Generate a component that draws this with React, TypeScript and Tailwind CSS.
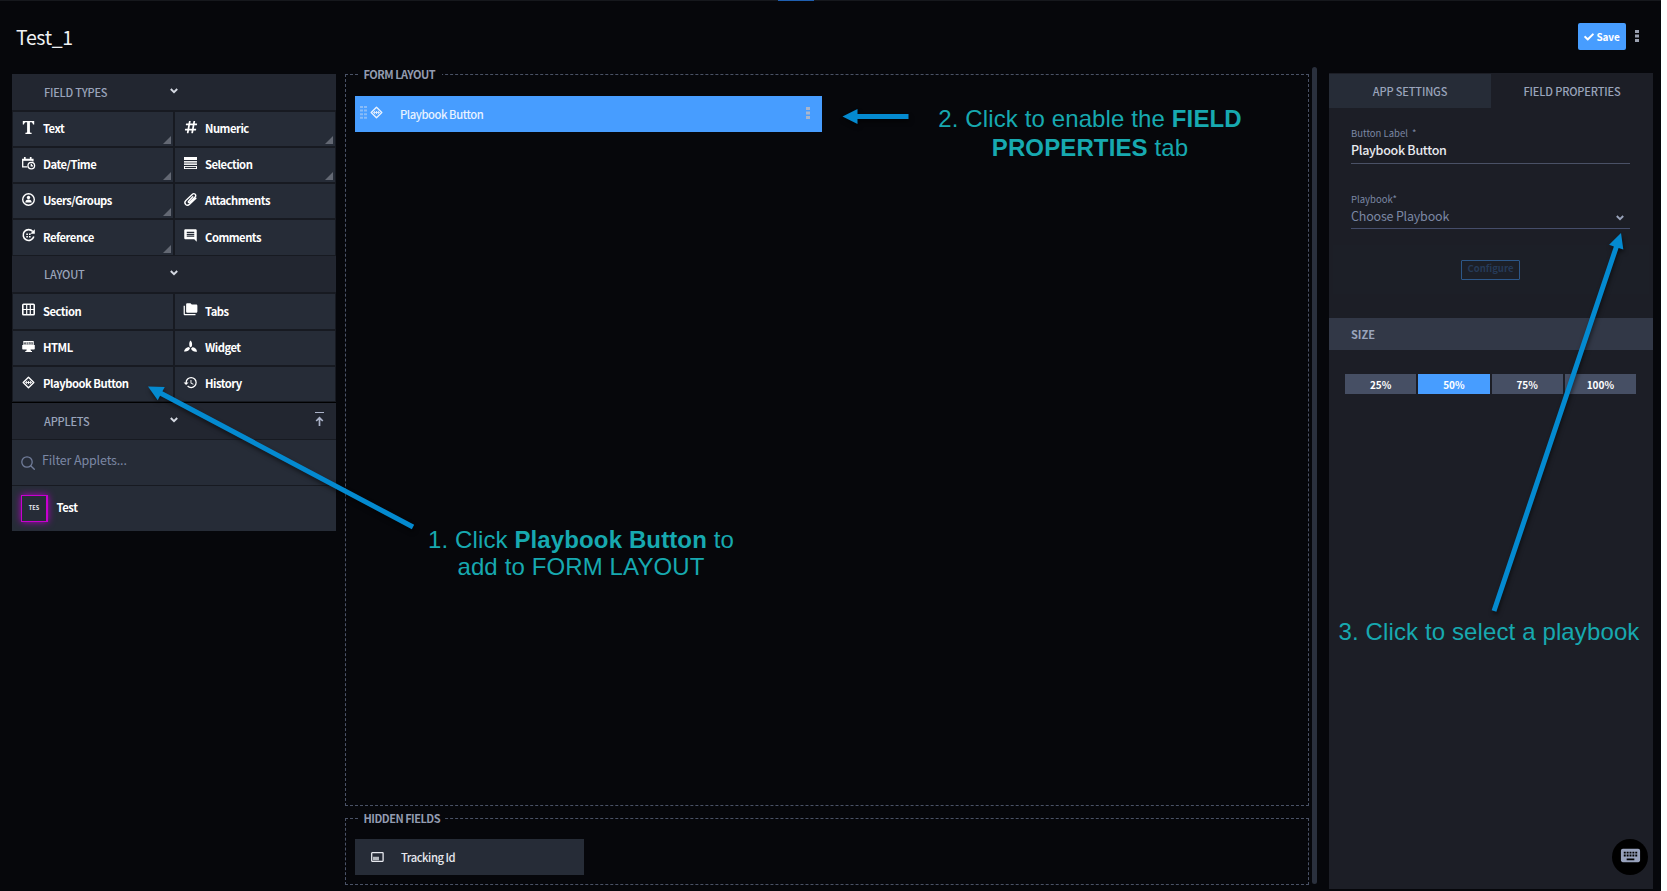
import React from "react";
import { FaCheck, FaHashtag } from "react-icons/fa";
import { MdComment, MdFolderCopy, MdHistory, MdKeyboard } from "react-icons/md";

type IconName =
  | "text" | "numeric" | "date" | "selection" | "users" | "attach" | "reference" | "comments"
  | "section" | "tabs" | "html" | "widget" | "playbook" | "history";

function Icon({ name }: { name: IconName }) {
  const cls = "block h-[13px] w-[13px] shrink-0 overflow-visible";
  switch (name) {
    case "text":
      return (
        <svg viewBox="0 0 13 13" className={cls} fill="currentColor">
          <path d="M.8 0h11.4v3.6H11C10.7 1.9 10 1.3 8.6 1.3H7.9v9.500c0 .7.3.9 1.700 1V13H3.400v-1.200c1.400-.1 1.700-.3 1.700-1V1.300h-.7C3 1.300 2.300 1.900 2 3.600H.8z" />
        </svg>
      );
    case "numeric":
      return <FaHashtag className="block h-[14px] w-[14px] shrink-0" />;
    case "comments":
      return <MdComment className="-m-px block h-[15px] w-[15px] shrink-0" />;
    case "tabs":
      return <MdFolderCopy className="-m-px block h-[15px] w-[15px] shrink-0" />;
    case "history":
      return <MdHistory className="-m-px block h-[15px] w-[15px] shrink-0" />;
    case "date":
      return (
        <svg viewBox="0 0 13 13" className={cls} fill="none" stroke="currentColor" strokeWidth="1.300">
          <path d="M5.500 9.900H.7V2.500h10.200V4.500" />
          <path d="M.5 2.800h10.600M2.800 0v3M8.700 0v3" strokeWidth="1.700" />
          <circle cx="9.300" cy="8.600" r="3.300" />
          <path d="M9.300 6.800v2.100h1.700" />
        </svg>
      );
    case "selection":
      return (
        <svg viewBox="0 0 13 13" className={cls} fill="currentColor">
          <path d="M0 0h13v3H0z" />
          <path d="M0 5h13v2H0z" opacity=".6" />
          <path d="M0 4h13v1H0zM0 7h13v1H0zM0 9h13v1H0zM0 11h13v1H0z" opacity=".9" />
          <path d="M0 9h1v3H0zM12 9h1v3h-1z" />
        </svg>
      );
    case "users":
      return (
        <svg viewBox="0 0 13 13" className={cls} fill="currentColor">
          <circle cx="6.500" cy="6.500" r="5.800" fill="none" stroke="currentColor" strokeWidth="1.400" />
          <circle cx="6.500" cy="4.500" r="1.700" />
          <path d="M3.300 9.500c0-2 1.200-3.100 3.200-3.100s3.200 1.100 3.200 3.100z" />
        </svg>
      );
    case "attach":
      return (
        <svg viewBox="0 0 13 13" className={cls} fill="none" stroke="currentColor" strokeWidth="1.400" strokeLinecap="round">
          <path d="M8.800 3.800 4.600 8.200c-.6.600-.2 1.300.2 1.400.4.100.8-.1 1-.3l5.300-5.200c1.200-1.200.6-2.500-.2-3.100C10 .4 9 .6 8.200 1.400L1.900 7.600c-1.300 1.300-1.200 2.900-.2 3.900 1.100 1 2.700.9 3.900-.2l6.300-6" />
        </svg>
      );
    case "reference":
      return (
        <svg viewBox="0 0 13 13" className={cls} fill="none" stroke="currentColor" strokeWidth="1.600">
          <path d="M10.800 2.600A5.400 5.400 0 1 0 11.800 7.500" />
          <path d="M8.200 4.700h4.600V.2z" fill="currentColor" stroke="none" />
          <path d="M4.300 5.200h1.600M7 5.200h1.600M4.300 7.700h1.600M7 7.700h1.600" />
        </svg>
      );
    case "section":
      return (
        <svg viewBox="0 0 13 13" className={cls} fill="none" stroke="currentColor">
          <rect x=".8" y="1.300" width="11.400" height="10.400" rx=".8" strokeWidth="1.600" />
          <path d="M4.700 1v11M8.300 1v11M1 6.500h11" strokeWidth="1.200" />
        </svg>
      );
    case "html":
      return (
        <svg viewBox="0 0 13 13" className={cls} fill="currentColor">
          <path d="M1.300 1h10.400v1H1.300zM.2 4.900h12.600v3.600c0 .6-.4 1-1 1H8.500l.5 1.500h1v1H3.300v-1h1l.4-1.500H1.200c-.6 0-1-.4-1-1z" />
          <path d="M1 2h11v3H1z" opacity=".75" />
          <path d="M2 2.400v2M3.700 2.400v2M2 3.400h1.700M5.500 2.400v2M7.300 4.400v-2l.9 1 .9-1v2M10.500 2.400v2" stroke="#2a2f3a" strokeWidth=".5" fill="none" />
        </svg>
      );
    case "widget":
      return (
        <svg viewBox="0 0 13 13" className={cls} fill="currentColor">
          <path d="M6.300.5c1.700 1 2.300 3.500 1.500 6L6 7.400C4.900 5.200 5 2.500 6.300.5zM5 6.900l1 1.700c-1 2.200-3.500 3.400-6 2.800C.3 9.200 2.300 7.100 5 6.900zM7 8.800l1.300-1.500c2.500 0 4.500 1.700 4.700 4.400-2.400.5-5-.6-6-2.900z" />
        </svg>
      );
    case "playbook":
      return (
        <svg viewBox="0 0 13 13" className={cls} fill="none" stroke="currentColor">
          <path d="M6.500 1.200 11.800 6.500 6.500 11.800 1.200 6.500z" strokeWidth="1.400" strokeLinejoin="round" />
          <path d="M3.500 6.500h6M5.300 4.800 3.600 6.500l1.700 1.700M7.700 4.800l1.700 1.700-1.700 1.700M6.500 5v3" strokeWidth=".9" />
        </svg>
      );
  }
}

function Chevron({ className }: { className: string }) {
  return (
    <svg viewBox="0 0 8 6" className={className} fill="none" stroke="currentColor" strokeWidth="1.900">
      <path d="M.8 1 4 4.200 7.200 1" />
    </svg>
  );
}

function Dots({ className }: { className: string }) {
  return (
    <svg viewBox="0 0 4 12" className={className} fill="currentColor">
      <path d="M0 0h4v3H0zM0 4.500h4v3H0zM0 9h4v3H0z" />
    </svg>
  );
}

type Cell = { icon: IconName; label: string; more?: boolean };

const fieldTypes: Cell[] = [
  { icon: "text", label: "Text", more: true },
  { icon: "numeric", label: "Numeric", more: true },
  { icon: "date", label: "Date/Time", more: true },
  { icon: "selection", label: "Selection", more: true },
  { icon: "users", label: "Users/Groups", more: true },
  { icon: "attach", label: "Attachments" },
  { icon: "reference", label: "Reference", more: true },
  { icon: "comments", label: "Comments" },
];

const layoutItems: Cell[] = [
  { icon: "section", label: "Section" },
  { icon: "tabs", label: "Tabs" },
  { icon: "html", label: "HTML" },
  { icon: "widget", label: "Widget" },
  { icon: "playbook", label: "Playbook Button" },
  { icon: "history", label: "History" },
];

function CellGrid({ items, className }: { items: Cell[]; className: string }) {
  return (
    <div className={"grid grid-cols-2 gap-[2px] px-px text-white " + className}>
      {items.map((c) => (
        <div key={c.label} className="relative flex items-center bg-[#262c37] pl-[9px]">
          <div className="-mt-[4px] flex w-[21px] shrink-0">
            <Icon name={c.icon} />
          </div>
          <span className="text-[11.250px] leading-none font-bold tracking-[-0.5px]">{c.label}</span>
          {c.more && (
            <svg viewBox="0 0 8 8" className="absolute right-[2px] bottom-[2px] h-2 w-2" fill="#636873">
              <path d="M8 0v8H0z" />
            </svg>
          )}
        </div>
      ))}
    </div>
  );
}

function GroupHeader({ label, children }: { label: string; children?: React.ReactNode }) {
  return (
    <div className="flex h-9 items-center bg-[#222630] pl-8">
      <span className="mt-px w-[125.500px] text-[11px] leading-none font-medium tracking-[-0.2px] text-[#9aa4bb]">{label}</span>
      <Chevron className="-mt-[3px] h-[6px] w-2 text-[#d5d9e2]" />
      {children}
    </div>
  );
}

function Sidebar() {
  return (
    <aside className="flex h-[457px] w-[324px] flex-col bg-[#171a21]">
      <GroupHeader label="FIELD TYPES" />
      <CellGrid items={fieldTypes} className="mt-[2px] mb-px grid-rows-[34px_34px_34px_35px]" />
      <GroupHeader label="LAYOUT" />
      <CellGrid items={layoutItems} className="mt-[2px] grid-rows-[35px_34px_34px]" />
      <div className="mt-px h-px bg-black" />
      <GroupHeader label="APPLETS">
        <svg viewBox="0 0 9 14" className="mr-3 -mt-[5px] ml-auto h-[14px] w-[9px]" fill="none" stroke="#aab2c8">
          <path d="M0 .5h9" />
          <path d="M4.500 14V6M1.200 9 4.500 5.800 7.800 9" strokeWidth="1.700" />
        </svg>
      </GroupHeader>
      <div className="mt-px flex h-[45px] items-center bg-[#262c37] pl-[9px]">
        <svg viewBox="0 0 14 14" className="mr-[7px] h-[14px] w-[14px]" fill="none" stroke="#717d9a" strokeWidth="1.300">
          <circle cx="6" cy="6" r="5.200" />
          <path d="m9.700 9.700 4 4" />
        </svg>
        <span className="-mt-[4px] text-[12.500px] leading-none tracking-[-0.15px] text-[#7b87a3]">Filter Applets...</span>
      </div>
      <div className="mt-px flex h-[45px] items-center bg-[#262c37] pl-[9px]">
        <div className="flex h-[27px] w-[27px] items-center justify-center border border-r-2 border-[#c800d0] text-[5.500px] leading-none font-bold text-[#e8eaf0] shadow-[0_0_7px_#b000c0]">
          TES
        </div>
        <span className="-mt-px ml-[8.500px] text-[11.250px] leading-none font-bold tracking-[-0.4px] text-white">Test</span>
      </div>
    </aside>
  );
}

function FormArea() {
  const legend = "text-[11px] leading-[14px] font-bold tracking-[-0.5px] text-[#939bb0]";
  return (
    <main className="ml-[9px] w-[964px]">
      <fieldset className="-mt-[7px] h-[739px] border border-dashed border-[#4a5266] px-[9px]">
        <legend className={"ml-[3px] pr-[7px] pl-[5.500px] " + legend}>FORM LAYOUT</legend>
        <div className="mt-[15px] flex h-9 w-[467px] items-center bg-[#479dff] pl-[5px] text-[#e8f2ff]">
          <svg viewBox="0 0 7 13" className="-mt-[3px] mr-[3px] h-[13px] w-[7px]" fill="#89bcf8">
            <path d="M0 0h3v2H0zM4 0h3v2H4zM0 3.600h3v2H0zM4 3.600h3v2H4zM0 7.200h3v2H0zM4 7.200h3v2H4zM0 10.800h3v2H0zM4 10.800h3v2H4z" />
          </svg>
          <div className="-mt-[3px]">
            <Icon name="playbook" />
          </div>
          <span className="mt-px ml-[17px] text-[11.250px] leading-none font-medium tracking-[-0.45px]">Playbook Button</span>
          <Dots className="mr-3 -mt-[2px] ml-auto h-3 w-1 text-[#a9b6cc]" />
        </div>
      </fieldset>
      <fieldset className="mt-[5px] h-[74px] border border-dashed border-[#4a5266] px-[9px]">
        <legend className={"ml-[3px] pr-[5px] pl-[5.500px] " + legend}>HIDDEN FIELDS</legend>
        <div className="mt-[14px] flex h-9 w-[229px] items-center bg-[#262c37] pl-4 text-[#e6e8ee]">
          <svg viewBox="0 0 13 10" className="h-[10px] w-[13px]" fill="none" stroke="currentColor">
            <rect x=".7" y=".7" width="11.400" height="8.600" rx=".5" strokeWidth="1.300" />
            <path d="M2 6.500h6" strokeWidth="3.500" opacity=".75" />
          </svg>
          <span className="mt-px ml-[17px] text-[11.250px] leading-none font-medium tracking-[-0.45px]">Tracking Id</span>
        </div>
      </fieldset>
    </main>
  );
}

const sizes = ["25%", "50%", "75%", "100%"];

function Properties() {
  return (
    <aside className="-mt-px ml-3 h-[816px] w-[324px] bg-[#1c1e26] pt-px">
      <div className="grid h-[34px] grid-cols-2 text-[11px] leading-none font-medium tracking-[-0.15px] text-[#9aa4bb]">
        <div className="flex items-center justify-center bg-[#262c37] pt-px">APP SETTINGS</div>
        <div className="flex items-center justify-center pt-px">FIELD PROPERTIES</div>
      </div>
      <div className="mx-[22px] mt-[19px] h-[37px] w-[279px] border-b border-[#4a5166]">
        <div className="text-[9.500px] leading-[12px] text-[#7b87a3]">Button Label&nbsp; *</div>
        <div className="mt-[3px] text-[12.500px] leading-[16px] font-medium tracking-[-0.3px] text-[#e8eaf0]">Playbook Button</div>
      </div>
      <div className="mx-[22px] mt-[29px] h-[36px] w-[279px] border-b border-[#454d6a]">
        <div className="text-[9.500px] leading-[12px] text-[#7b87a3]">Playbook*</div>
        <div className="mt-[3px] flex items-center justify-between pr-[6px] text-[12.500px] leading-[16px] tracking-[-0.2px] text-[#7b87a3]">
          Choose Playbook
          <Chevron className="mt-[3px] h-[6px] w-2 text-[#9aa4bb]" />
        </div>
      </div>
      <div className="mx-1 mt-4 flex h-[49px] items-center justify-center bg-[#1c1f27] pr-px">
        <div className="h-5 w-[59px] rounded-[1px] border border-[#2d5788] text-center text-[9.500px] leading-[15px] font-bold text-[#263a57]">
          Configure
        </div>
      </div>
      <div className="mt-6 flex h-8 items-center bg-[#323847] pl-[22px] text-[11px] leading-none font-bold text-[#9aa4bb]">SIZE</div>
      <div className="mt-6 ml-4 grid h-5 w-[291px] grid-cols-4 gap-[2px] text-[10px] leading-none font-bold text-white">
        {sizes.map((s) => (
          <div key={s} className={"flex items-center justify-center pt-px " + (s === "50%" ? "bg-[#479dff]" : "bg-[#464f64]")}>
            {s}
          </div>
        ))}
      </div>
    </aside>
  );
}

function Arrow({ x1, y1, x2, y2 }: { x1: number; y1: number; x2: number; y2: number }) {
  const length = Math.hypot(x2 - x1, y2 - y1);
  const angle = (Math.atan2(y2 - y1, x2 - x1) * 180) / Math.PI;
  return (
    <path
      transform={`translate(${x1} ${y1}) rotate(${angle})`}
      d={`M0 0 15-7.500V-2.500H${length}V2.500H15V7.500z`}
      fill="#048ad0"
    />
  );
}

function Annotations() {
  const text = "absolute text-center font-['Liberation_Sans',Arial,sans-serif] text-[24px] tracking-[0.12px] whitespace-nowrap text-[#17a9b0]";
  return (
    <>
      <svg viewBox="0 0 1667 891" className="pointer-events-none absolute inset-0 h-[891px] w-[1667px] drop-shadow-[1px_3px_2px_rgba(0,0,0,0.5)]">
        <Arrow x1={148} y1={386.5} x2={413} y2={527} />
        <Arrow x1={842.5} y1={116.5} x2={908.500} y2={116.5} />
        <Arrow x1={1621} y1={233} x2={1494} y2={611} />
      </svg>
      <div className={text + " top-[526px] left-[428px] w-[306px] leading-[27px]"}>
        1. Click <b>Playbook Button</b> to
        <br />
        add to FORM LAYOUT
      </div>
      <div className={text + " top-[104px] left-[937px] w-[306px] leading-[29px]"}>
        2. Click to enable the <b>FIELD</b>
        <br />
        <b>PROPERTIES</b> tab
      </div>
      <div className={text + " top-[618px] left-[1338px] w-[302px] leading-[28px]"}>3. Click to select a playbook</div>
      <div className="absolute top-[839px] left-[1612px] flex h-9 w-9 items-center justify-center rounded-full bg-black">
        <MdKeyboard className="-mt-[3px] h-[23px] w-[23px] text-[#98a2bd]" />
      </div>
    </>
  );
}

export default function App() {
  return (
    <div className="relative h-[891px] w-[1667px] overflow-hidden bg-white font-['Noto_Sans_CJK_SC','Noto_Sans',sans-serif]">
      <div className="h-full w-[1661px] bg-[#06070b]">
        <div className="flex h-px bg-[#16181d] pl-[778px]">
          <div className="w-9 bg-[#1f5fb0]" />
        </div>
        <header className="flex h-[73px] items-center pr-[22px] pb-[2px] pl-4">
          <h1 className="text-[19.500px] leading-none tracking-[-0.35px] text-[#f0f1f4]">Test_1</h1>
          <div className="ml-auto flex h-[27px] w-12 items-center justify-center gap-[2px] rounded-[2px] bg-[#479dff] text-[10px] leading-none font-bold tracking-[-0.1px] text-white">
            <FaCheck className="h-[10px] w-[10px]" />
            Save
          </div>
          <Dots className="-mt-[2px] ml-[9px] h-3 w-1 text-[#9aa0b0]" />
        </header>
        <div className="flex items-start pl-3">
          <Sidebar />
          <FormArea />
          <div className="-mt-[7px] ml-[3px] h-[817px] w-[5px] rounded-full bg-[#2a303d]" />
          <Properties />
        </div>
      </div>
      <Annotations />
    </div>
  );
}
